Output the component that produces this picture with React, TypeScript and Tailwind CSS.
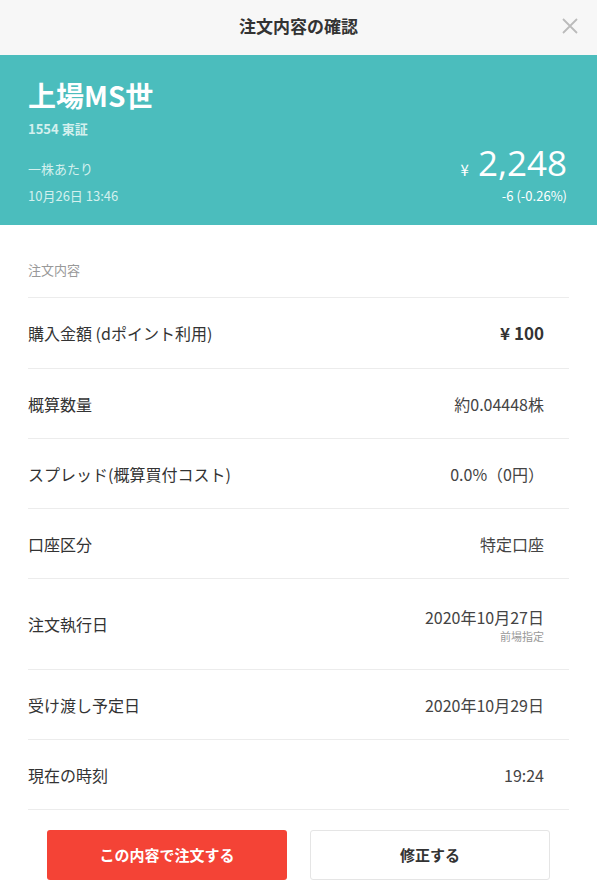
import React from "react";

const rows = [
  { label: "購入金額 (dポイント利用)", value: "¥ 100", bold: true, h: "h-[71px]" },
  { label: "概算数量", value: "約0.04448株", h: "h-[70px]" },
  { label: "スプレッド(概算買付コスト)", value: "0.0%（0円）", h: "h-[70px]" },
  { label: "口座区分", value: "特定口座", h: "h-[70px]" },
  { label: "注文執行日", value: "2020年10月27日", sub: "前場指定", h: "h-[91px]" },
  { label: "受け渡し予定日", value: "2020年10月29日", h: "h-[70px]" },
  { label: "現在の時刻", value: "19:24", h: "h-[70px]" },
];

export default function App() {
  return (
    <div className="w-[597px] h-[888px] overflow-hidden bg-white text-[#333] font-['Noto_Sans_CJK_JP','Noto_Sans',sans-serif]">
      {/* header */}
      <div className="relative h-[55px] bg-[#f7f7f7] flex items-center justify-center pb-[4px]">
        <h1 className="text-[17px] font-bold text-[#333]">注文内容の確認</h1>
        <button className="absolute right-[17px] top-[16px] text-[#bbb]" aria-label="close">
          <svg width="20" height="20" viewBox="0 0 20 20" fill="none" stroke="currentColor" strokeWidth="1.8">
            <path d="M3 3 L17 17 M17 3 L3 17" />
          </svg>
        </button>
      </div>

      {/* stock band */}
      <div className="h-[170px] bg-[#4bbdbd] px-[30px] pt-[22px] text-white">
        <div className="text-[28px] font-bold leading-[36px] -ml-[2px]">上場MS世</div>
        <div className="text-[13px] font-bold text-[#d4f0ee] mt-[6px] -ml-[2px]">1554 東証</div>
        <div className="flex justify-between items-end mt-[6px]">
          <div className="text-[13px] text-[#d4f0ee] -ml-[2px]">
            <div className="leading-[20px]">一株あたり</div>
            <div className="leading-[20px] mt-[7px]">10月26日 13:46</div>
          </div>
          <div className="text-right">
            <div className="flex items-baseline justify-end">
              <span className="text-[15px] mr-[9px]">¥</span>
              <span className="text-[35px] leading-[36px] font-['Open_Sans','Noto_Sans',sans-serif]">2,248</span>
            </div>
            <div className="text-[13px] leading-[20px] mt-[5px]">-6 (-0.26%)</div>
          </div>
        </div>
      </div>

      {/* order details */}
      <div className="px-[28px]">
        <div className="h-[73px] pt-[37px] text-[13px] leading-[16px] text-[#999] border-b border-[#ececec]">注文内容</div>
        {rows.map((r) => (
          <div key={r.label} className={`flex items-center justify-between border-b border-[#ececec] ${r.h}`}>
            <span className="text-[16px]">{r.label}</span>
            <div className="text-right pr-[25px]">
              <div className={r.bold ? "text-[17px] font-bold text-[#333]" : "text-[16px] text-[#444]"}>{r.value}</div>
              {r.sub && <div className="text-[11px] text-[#999] leading-[14px]">{r.sub}</div>}
            </div>
          </div>
        ))}
        <div className="flex justify-center gap-[23px] mt-[20px]">
          <button className="w-[240px] h-[50px] rounded-[3px] bg-[#f44336] text-white text-[15px] font-bold">この内容で注文する</button>
          <button className="w-[240px] h-[50px] rounded-[3px] bg-white border border-[#e5e5e5] text-[#333] text-[15px] font-bold">修正する</button>
        </div>
      </div>
    </div>
  );
}
